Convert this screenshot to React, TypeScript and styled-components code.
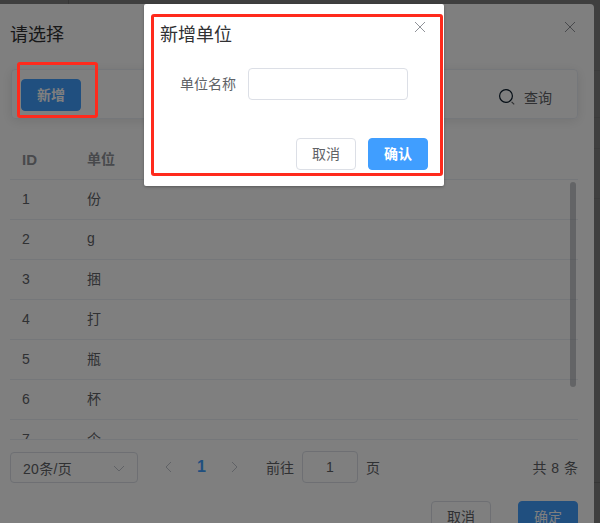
import React from "react";
import styled, { createGlobalStyle } from "styled-components";

const Global = createGlobalStyle`
  html, body { margin: 0; padding: 0; height: 100%; overflow: hidden; background: #404040; }
  * { box-sizing: border-box; }
  #root { height: 100%; }
`;

const font = `"Liberation Sans", "Noto Sans CJK SC", sans-serif`;

const Page = styled.div`
  position: relative;
  width: 600px;
  height: 523px;
  padding-top: 4px;
  font-family: ${font};
  overflow: hidden;
  background-color: #7f7f7f;
  background-image:
    linear-gradient(#6c6c6c, #6c6c6c),
    linear-gradient(#767676, #767676),
    linear-gradient(#767676, #767676),
    linear-gradient(#767676, #767676),
    linear-gradient(#767676, #767676),
    linear-gradient(#6c6c6c, #6c6c6c);
  background-size: 1px 4px, 100% 1px, 100% 1px, 100% 1px, 100% 1px, 100% 1px;
  background-position: 68px 0, 0 70px, 0 117px, 0 148px, 0 198px, 0 482px;
  background-repeat: no-repeat;
`;

const Sheet = styled.div`
  width: 594px;
  height: 560px;
  background: #fff;
  border-radius: 0 4px 0 0;
  padding: 0 16px 0 10px;
  color: #606266;
`;

const SheetHead = styled.div`
  display: flex;
  align-items: center;
  justify-content: space-between;
  height: 60px;
  padding: 1px 2px 0 0;
`;

const Title = styled.div`
  font-size: 18px;
  line-height: 24px;
  color: #303133;
`;

const CloseButton = styled.button`
  border: 0;
  background: none;
  padding: 0;
  width: 12px;
  height: 12px;
  display: block;
  color: #909399;
  svg { display: block; }
`;

const SheetClose = styled.div`
  align-self: flex-start;
  margin-top: 16px;
`;

const Toolbar = styled.div`
  margin: 5px 0 0 1px;
  height: 50px;
  display: flex;
  align-items: flex-start;
  justify-content: space-between;
  padding: 9px 25px 0 9px;
  border: 1px solid #ebeef5;
  border-radius: 4px;
  box-shadow: 0 2px 12px rgba(0, 0, 0, 0.1);
`;

const Button = styled.button<{ $primary?: boolean; $bold?: boolean }>`
  width: 60px;
  height: 32px;
  border-radius: 4px;
  border: 1px solid ${(p) => (p.$primary ? "#409eff" : "#dcdfe6")};
  background: ${(p) => (p.$primary ? "#409eff" : "#fff")};
  color: ${(p) => (p.$primary ? "#fff" : "#606266")};
  font-family: ${font};
  font-size: 14px;
  line-height: 1;
  font-weight: ${(p) => (p.$bold ? 700 : 400)};
  padding: 0;
`;

const Search = styled.div`
  display: flex;
  align-items: center;
  gap: 9px;
  height: 32px;
  margin-top: 2px;
  font-size: 14px;
  color: #606266;
  svg { display: block; }
`;

const TableHead = styled.div`
  margin-top: 21px;
  height: 40px;
  display: grid;
  grid-template-columns: 65px 1fr;
  align-items: center;
  padding: 0 0 1px 12px;
  border-bottom: 1px solid #ebeef5;
  font-size: 14px;
  font-weight: 700;
  color: #909399;
`;

const IdHead = styled.span`
  font-size: 15px;
`;

const UnitCell = styled.span`
  padding-bottom: 2px;
`;

const TableBody = styled.div`
  position: relative;
  height: 260px;
  overflow: hidden;
  border-bottom: 1px solid #ebeef5;
`;

const Row = styled.div`
  height: 40px;
  display: grid;
  grid-template-columns: 65px 1fr;
  align-items: center;
  padding: 0 0 2px 12px;
  border-bottom: 1px solid #ebeef5;
  font-size: 14px;
  color: #606266;
`;

const Thumb = styled.div`
  position: absolute;
  top: 2px;
  right: 2px;
  width: 6px;
  height: 205px;
  border-radius: 3px;
  background: rgba(144, 147, 153, 0.5);
`;

const Pager = styled.div`
  margin-top: 11px;
  display: flex;
  align-items: center;
  height: 32px;
  font-size: 14px;
  color: #606266;
`;

const SizeSelect = styled.div`
  width: 128px;
  height: 31px;
  align-self: flex-end;
  display: flex;
  align-items: center;
  justify-content: space-between;
  padding: 0 11px 0 12px;
  border: 1px solid #dcdfe6;
  border-radius: 4px;
  font-size: 14px;
  letter-spacing: 0.3px;
  svg { display: block; }
`;

const PageNav = styled.div`
  display: grid;
  grid-template-columns: 32px 33px 32px;
  margin-left: 15px;
  justify-items: center;
  align-items: center;
  color: #c0c4cc;
  svg { display: block; }
`;

const Current = styled.span`
  font-weight: 700;
  color: #409eff;
  font-size: 16px;
`;

const Goto = styled.div`
  display: flex;
  align-items: center;
  margin-left: 16px;
  gap: 8px;
`;

const PageInput = styled.div`
  width: 56px;
  height: 32px;
  border: 1px solid #dcdfe6;
  border-radius: 4px;
  display: flex;
  align-items: center;
  justify-content: center;
`;

const Total = styled.div`
  margin-left: auto;
  word-spacing: 1px;
`;

const SheetFoot = styled.div`
  margin-top: 18px;
  display: flex;
  justify-content: flex-end;
  gap: 27px;
`;

const Overlay = styled.div`
  position: absolute;
  inset: 0;
  background: rgba(0, 0, 0, 0.5);
`;

const Modal = styled.div`
  position: absolute;
  left: 144px;
  top: 4px;
  width: 300px;
  height: 182px;
  background: #fff;
  border-radius: 2px;
  box-shadow: 0 1px 3px rgba(0, 0, 0, 0.3);
  padding: 0 16px;
  display: flex;
  flex-direction: column;
`;

const ModalHead = styled.div`
  height: 60px;
  display: flex;
  justify-content: space-between;
  align-items: center;
  padding-top: 1px;
`;

const ModalClose = styled.div`
  align-self: flex-start;
  margin-top: 16px;
  margin-right: 2px;
`;

const Field = styled.div`
  display: flex;
  align-items: center;
  gap: 12px;
  margin-top: 4px;
  padding-left: 20px;
`;

const Label = styled.label`
  font-size: 14px;
  color: #606266;
  padding-bottom: 2px;
`;

const TextInput = styled.input`
  width: 160px;
  height: 32px;
  border: 1px solid #dcdfe6;
  border-radius: 4px;
  background: #fff;
  outline: none;
`;

const ModalFoot = styled.div`
  margin-top: 38px;
  display: flex;
  justify-content: flex-end;
  gap: 12px;
`;

const Mark = styled.div<{ $x: number; $y: number; $w: number; $h: number }>`
  position: absolute;
  left: ${(p) => p.$x}px;
  top: ${(p) => p.$y}px;
  width: ${(p) => p.$w}px;
  height: ${(p) => p.$h}px;
  border: 3px solid #ff2a1c;
  border-radius: 3px;
  pointer-events: none;
`;

const Cross = () => (
  <svg width="12" height="12" viewBox="0 0 12 12" fill="none" stroke="currentColor" strokeWidth="1">
    <path d="M1 1l10 10M11 1L1 11" />
  </svg>
);

const rows: [string, string][] = [
  ["1", "份"],
  ["2", "g"],
  ["3", "捆"],
  ["4", "打"],
  ["5", "瓶"],
  ["6", "杯"],
  ["7", "个"],
];

export default function App() {
  return (
    <Page>
      <Global />
      <Sheet>
        <SheetHead>
          <Title>请选择</Title>
          <SheetClose><CloseButton aria-label="close"><Cross /></CloseButton></SheetClose>
        </SheetHead>
        <Toolbar>
          <Button $primary $bold>新增</Button>
          <Search>
            <svg width="16" height="16" viewBox="0 0 16 16" fill="none" stroke="#0a1c2c" strokeWidth="1.2">
              <circle cx="7" cy="7" r="6.4" />
              <path d="M12.6 12.8l2.6 2.6" stroke="#606266" />
            </svg>
            查询
          </Search>
        </Toolbar>
        <TableHead><IdHead>ID</IdHead><UnitCell>单位</UnitCell></TableHead>
        <TableBody>
          {rows.map(([id, unit]) => (
            <Row key={id}><span>{id}</span><UnitCell>{unit}</UnitCell></Row>
          ))}
          <Thumb />
        </TableBody>
        <Pager>
          <SizeSelect>
            20条/页
            <svg width="14" height="14" viewBox="0 0 14 14" fill="none" stroke="#c0c4cc" strokeWidth="1">
              <path d="M2 5l5 5 5-5" />
            </svg>
          </SizeSelect>
          <PageNav>
            <svg width="10" height="12" viewBox="0 0 10 12" fill="none" stroke="currentColor"><path d="M7 1L2 6l5 5" /></svg>
            <Current>1</Current>
            <svg width="10" height="12" viewBox="0 0 10 12" fill="none" stroke="currentColor"><path d="M3 1l5 5-5 5" /></svg>
          </PageNav>
          <Goto>
            前往
            <PageInput>1</PageInput>
            页
          </Goto>
          <Total>共 8 条</Total>
        </Pager>
        <SheetFoot>
          <Button>取消</Button>
          <Button $primary>确定</Button>
        </SheetFoot>
      </Sheet>
      <Overlay />
      <Modal>
        <ModalHead>
          <Title>新增单位</Title>
          <ModalClose><CloseButton aria-label="close"><Cross /></CloseButton></ModalClose>
        </ModalHead>
        <Field>
          <Label>单位名称</Label>
          <TextInput />
        </Field>
        <ModalFoot>
          <Button>取消</Button>
          <Button $primary $bold>确认</Button>
        </ModalFoot>
      </Modal>
      <Mark $x={17} $y={62} $w={81} $h={56} />
      <Mark $x={151} $y={14} $w={292} $h={162} />
    </Page>
  );
}
